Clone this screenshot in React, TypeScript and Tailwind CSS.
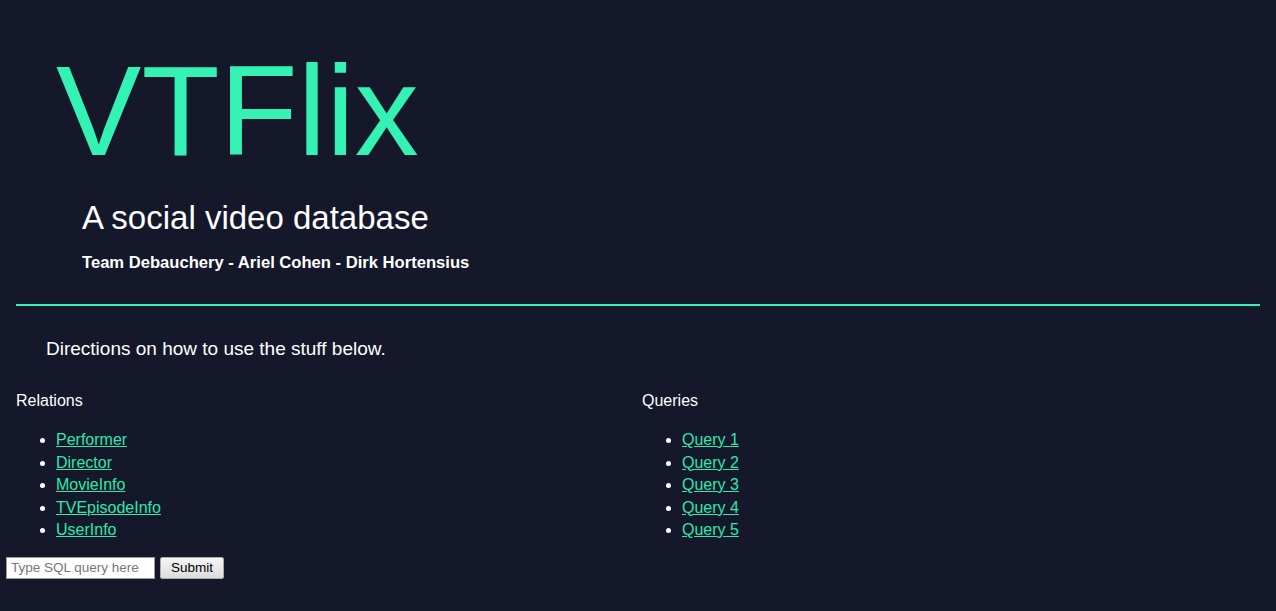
import React from "react";

const relations = ["Performer", "Director", "MovieInfo", "TVEpisodeInfo", "UserInfo"];
const queries = ["Query 1", "Query 2", "Query 3", "Query 4", "Query 5"];

function LinkList({ title, items }: { title: string; items: string[] }) {
  return (
    <div>
      <div className="text-[16px] leading-[20px]">{title}</div>
      <ul className="mt-[18px] pl-[40px] list-disc text-[16px] leading-[22.5px]">
        {items.map((item) => (
          <li key={item}>
            <a href="#" className="text-[#2fe8ab] underline">
              {item}
            </a>
          </li>
        ))}
      </ul>
    </div>
  );
}

export default function App() {
  return (
    <div className="min-h-[611px] bg-[#14182a] text-white font-['Liberation_Sans',Arial,sans-serif]">
      <header className="px-4">
        <div className="pl-[40px] pt-[36px] text-[128px] leading-[150px] text-[#33f2b4]">VTFlix</div>
        <div className="pl-[66px] mt-[13px]">
          <h2 className="text-[33px] leading-[38px]">A social video database</h2>
          <h4 className="mt-[16px] text-[16.6px] leading-[20px] font-bold">
            Team Debauchery - Ariel Cohen - Dirk Hortensius
          </h4>
        </div>
        <div className="mt-[31px] h-[2px] bg-[#33f2b4]" />
        <p className="pl-[30px] mt-[32px] text-[19px] leading-[22px]">
          Directions on how to use the stuff below.
        </p>
        <div className="mt-[31px] grid grid-cols-[626px_1fr]">
          <LinkList title="Relations" items={relations} />
          <LinkList title="Queries" items={queries} />
        </div>
      </header>
      <form className="mt-[15px] pl-[6px] flex items-center gap-[5px]" onSubmit={(e) => e.preventDefault()}>
        <input
          type="text"
          placeholder="Type SQL query here"
          className="w-[149px] h-[22px] px-[4px] bg-white text-black text-[13.5px] border border-[#999] placeholder:text-[#777]"
        />
        <button
          type="submit"
          className="h-[22px] px-[10px] text-black text-[13.5px] bg-gradient-to-b from-[#f6f6f6] to-[#dcdcdc] border border-[#aaa] rounded-[2px]"
        >
          Submit
        </button>
      </form>
    </div>
  );
}
